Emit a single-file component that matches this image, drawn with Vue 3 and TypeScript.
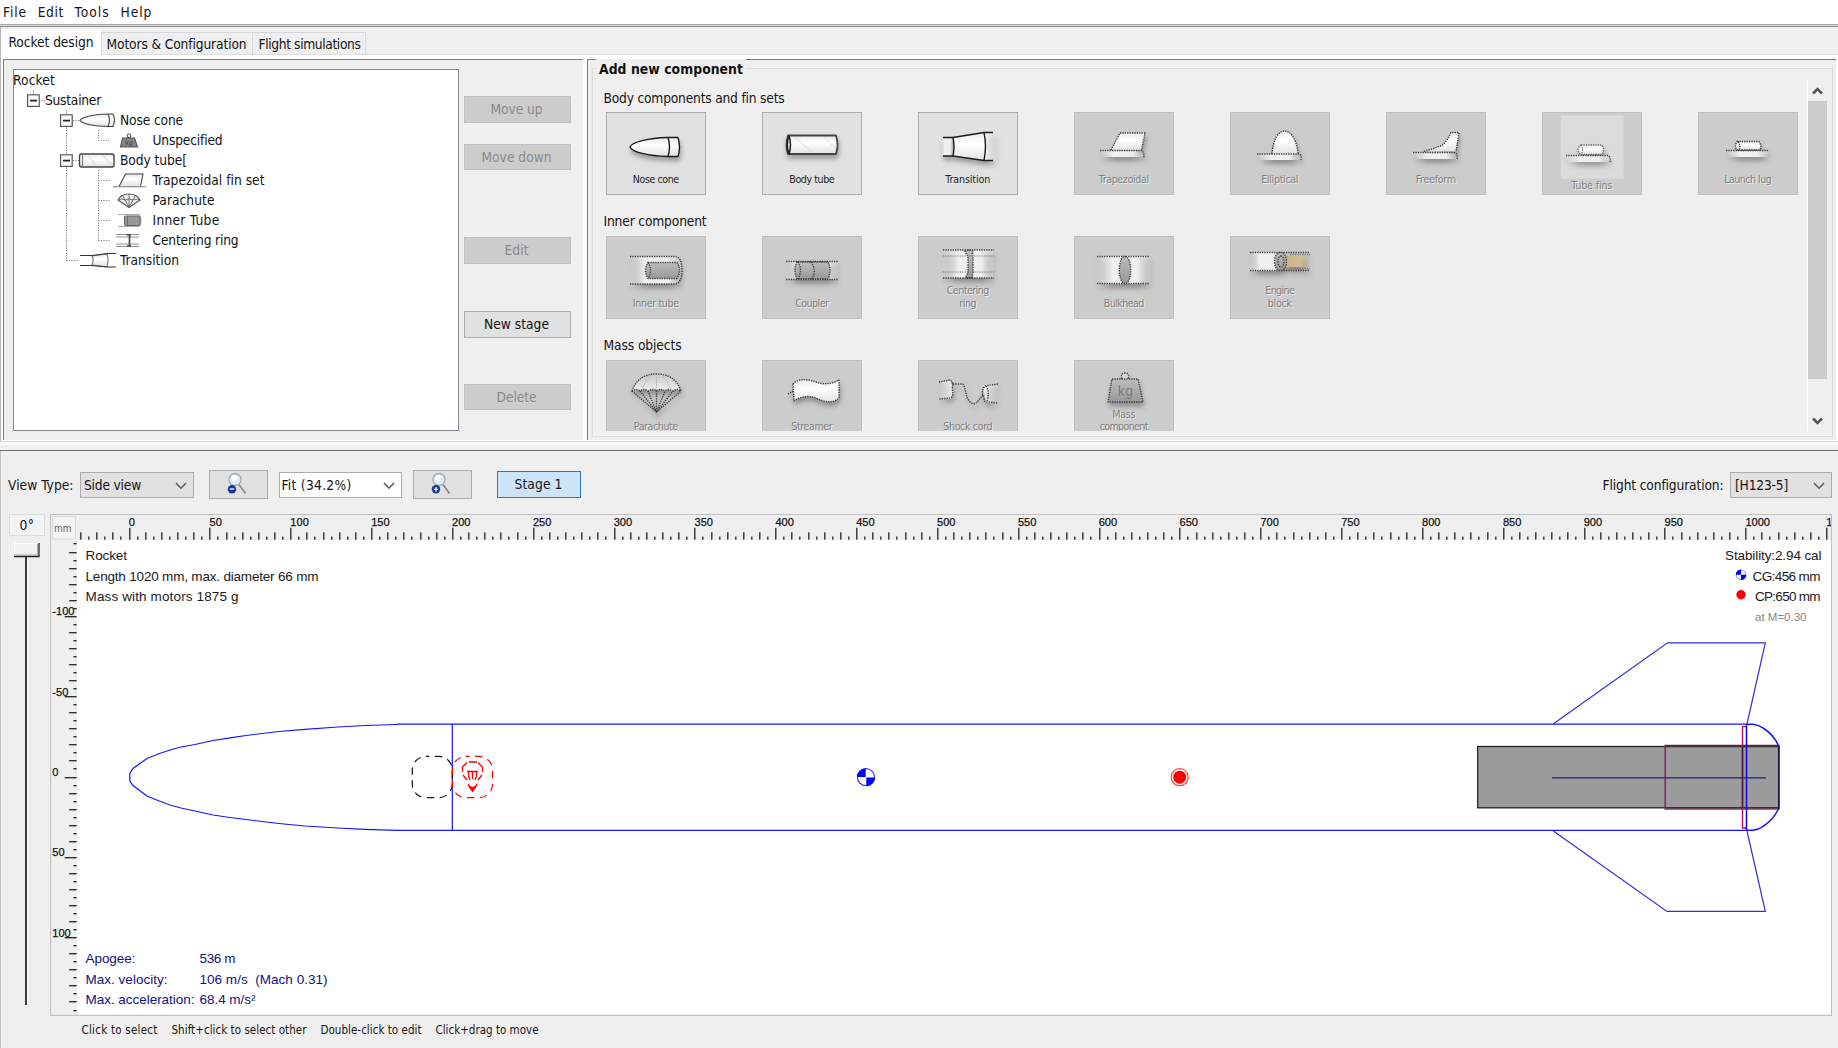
<script setup lang="ts">
interface Shape { d: string; fill?: string; stroke?: string; w?: number }
interface Card { label: string[]; width: number[]; enabled?: boolean; tile?: boolean; low?: boolean; kg?: boolean; shapes: Shape[] }
interface Section { title: string; width: number; cards: Card[] }
interface TreeRow { text: string; x: number; width: number; box?: number; icon?: string }

// Tightens or loosens tracking so that a label takes the given width.
const fit = (el: HTMLElement, width: number) => {
  el.style.letterSpacing = '0px'
  const n = (el.textContent ?? '').length
  if (n > 0) el.style.letterSpacing = `${(width - el.getBoundingClientRect().width) / n}px`
}
const vFit = { mounted: (el: HTMLElement, b: { value: number }) => fit(el, b.value) }

const menus = [
  { text: 'File', width: 24 }, { text: 'Edit', width: 26 }, { text: 'Tools', width: 35 }, { text: 'Help', width: 32 },
]

const tree: TreeRow[] = [
  { text: 'Rocket', x: 0, width: 42 },
  { text: 'Sustainer', x: 32, width: 56, box: 14 },
  { text: 'Nose cone', x: 107, width: 63, box: 47, icon: 'nose' },
  { text: 'Unspecified', x: 139.5, width: 70, icon: 'mass' },
  { text: 'Body tube[', x: 107, width: 67, box: 47, icon: 'tube' },
  { text: 'Trapezoidal fin set', x: 139.5, width: 112, icon: 'fin' },
  { text: 'Parachute', x: 139.5, width: 62, icon: 'chute' },
  { text: 'Inner Tube', x: 139.5, width: 67, icon: 'inner' },
  { text: 'Centering ring', x: 139.5, width: 86, icon: 'ring' },
  { text: 'Transition', x: 107, width: 59, icon: 'trans' },
]

const W = 'url(#metal)'
const F = 'url(#fade)'
const G = 'url(#dark)'
const N = 'none'

const sections: Section[] = [
  {
    title: 'Body components and fin sets', width: 181, cards: [
      { label: ['Nose cone'], width: [46], enabled: true, shapes: [
        { d: 'M24 35C26 30 42 26 62 25.5H72Q75 35 72 44.5H62C42 44 26 40 24 35Z', fill: W },
        { d: 'M62 25.5Q65 35 62 44.5', fill: N }] },
      { label: ['Body tube'], width: [45], enabled: true, shapes: [
        { d: 'M26 23.5H74Q77 33 74 42H26Q23 33 26 23.5Z', fill: W, stroke: '#444', w: 1.8 },
        { d: 'M33 25L51 41M62 25L74 37', fill: N, stroke: '#d8d8d8', w: 0.8 },
        { d: 'M27 23.5Q30 33 27 42Q23.500 33 27 23.500', fill: '#ddd' }] },
      { label: ['Transition'], width: [45], enabled: true, shapes: [
        { d: 'M23 25.5H35V44H23Z', fill: F, stroke: N },
        { d: 'M67 20.500H80V49H67Z', fill: 'url(#fadeR)', stroke: N },
        { d: 'M35 25.5L66 20.500Q69 34 66 48.500L35 44Q37 35 35 25.500Z', fill: W },
        { d: 'M25 25.500H35M25 44H35M66 20.500H75M66 48.500H75', fill: N }] },
      { label: ['Trapezoidal'], width: [50], shapes: [
        { d: 'M26 38.500H70V45H28Z', fill: F, stroke: N },
        { d: 'M37 38L46 21H71L67.500 38', fill: W },
        { d: 'M26 38.500H68Q70 40 70 46', fill: N }] },
      { label: ['Elliptical'], width: [37], shapes: [
        { d: 'M27 42H71V48H31Z', fill: F, stroke: N },
        { d: 'M42 42C43 28 48 19 54.500 19C61 19 67 28 68 42', fill: W },
        { d: 'M27 42H69Q72 43 71 48', fill: N }] },
      { label: ['Freeform'], width: [40], shapes: [
        { d: 'M27 40.500H71V47H30Z', fill: F, stroke: N },
        { d: 'M38 39.500L56 33.500Q62 28 65 20.500H73L70 39.500', fill: W },
        { d: 'M27 40.500H69Q72 42 71 47', fill: N }] },
      { label: ['Tube fins'], width: [41], tile: true, low: true, shapes: [
        { d: 'M24 43.500H68V50H28Z', fill: F, stroke: N },
        { d: 'M39 33H60Q63 38 60 42.500H39Q33 38 39 33Z', fill: W, stroke: '#666' },
        { d: 'M39 33Q42 38 39 42.500', fill: N, stroke: '#888' },
        { d: 'M24 43.500H66Q69 45 68 50', fill: N }] },
      { label: ['Launch lug'], width: [47], shapes: [
        { d: 'M28 38.500H71L69 45H31Z', fill: F, stroke: N },
        { d: 'M39 29.500H61Q64 34 62 38H39Q36 34 39 29.500Z', fill: W },
        { d: 'M40 29.500Q43 34 41 38M28 38.500H71', fill: N }] },
    ],
  },
  {
    title: 'Inner component', width: 103, cards: [
      { label: ['Inner tube'], width: [46], shapes: [
        { d: 'M24 20.500H72Q79 34 72 48H24Z', fill: F, stroke: N },
        { d: 'M42 26.500H71Q76 34 71 42.500H42Q37 34 42 26.500Z', fill: G },
        { d: 'M42 26.500Q47 34 42 42.500M24 20.500H69Q76 21 76 34Q76 47 69 48H24', fill: N }] },
      { label: ['Coupler'], width: [33], shapes: [
        { d: 'M24 25.500H76V43.500H24Z', fill: F, stroke: N },
        { d: 'M35 26H66Q70 34 66 43H35Q31 34 35 26Z', fill: G },
        { d: 'M36 26Q41 34 36 43M49 26Q55 34 50 43M24 25.500H76M24 43.500H76', fill: N }] },
      { label: ['Centering', 'ring'], width: [42, 17], shapes: [
        { d: 'M25 14H76V42H25Z', fill: F, stroke: N },
        { d: 'M47 15Q51 13 55 15Q54 19 55 21V36Q54 40 55 42H48Q48 39 50 37V20Q48 18 47 15Z', fill: G },
        { d: 'M25 14H76M25 42H76', fill: N },
        { d: 'M25 20H76M25 36H76', fill: N, stroke: '#777', w: 1.1 }] },
      { label: ['Bulkhead'], width: [40], shapes: [
        { d: 'M22 20H77V48H22Z', fill: F, stroke: N },
        { d: 'M23 20.500H76M23 47.500H76', fill: N },
        { d: 'M51 20.500C58.500 20.500 58.500 47.500 51 47.500C43.500 47.500 43.500 20.500 51 20.500Z', fill: G }] },
      { label: ['Engine', 'block'], width: [29, 24], shapes: [
        { d: 'M20 16H52V35H20Z', fill: F, stroke: N },
        { d: 'M52 20H79V31H52Z', fill: 'url(#tan)', stroke: N },
        { d: 'M20 16.500H80M20 34.500H80', fill: N },
        { d: 'M60 18.500H80M60 32.500H80', fill: N, stroke: '#777' },
        { d: 'M50.500 16.500C58.500 16.500 58.500 34.500 50.500 34.500C42.500 34.500 42.500 16.500 50.500 16.500ZM51 20C55 20 55 31 51 31C47 31 47 20 51 20Z', fill: G }] },
    ],
  },
  {
    title: 'Mass objects', width: 78, cards: [
      { label: ['Parachute'], width: [44], shapes: [
        { d: 'M26 31Q32 14 50.500 14Q69 14 75 31Q70 28 67 31Q62 28 59 31Q54 28 50.500 31Q47 28 42 31Q39 28 34 31Q30 28 26 31Z', fill: 'url(#canopy)' },
        { d: 'M26 31L50.500 52L75 31M34 31L50.500 52L67 31M42 31L50.500 52L59 31M50.500 31V52', fill: N },
        { d: 'M36 30Q39 21 44 17M65 30Q62 21 57 17M50.500 17V30', fill: N, stroke: '#aaa', w: 1 }] },
      { label: ['Streamer'], width: [41], shapes: [
        { d: 'M31 24C36 18 46 19 54 22C62 25 70 24 77 20V38C71 44 62 42 54 38C45 35 38 37 32 41Z', fill: W },
        { d: 'M26 34L31 31', fill: N }] },
      { label: ['Shock cord'], width: [49], shapes: [
        { d: 'M21 21H32Q37 30 33 39H21Z', fill: 'url(#fadeL)', stroke: N },
        { d: 'M65 25H80V43H68Z', fill: 'url(#fadeR)', stroke: N },
        { d: 'M21 22L32 20Q36 22 34 29Q36 35 33 38L21 39M35 24H45C49 31 47 37 52 42Q56 46 60 41L65 35M80 24L67 26Q62 31 66 38Q66 43 70 42L80 43M68 26Q72 32 69 41', fill: N }] },
      { label: ['Mass', 'component'], width: [23, 48], kg: true, shapes: [
        { d: 'M48 19Q46 13 51 13Q56 13 54 19', fill: '#ddd' },
        { d: 'M38 19H64L69 42H34Z', fill: G }] },
    ],
  },
]

const SX = 1.6167
const SY = 1.607
const hTicks = Array.from({ length: 217 }, (_, i) => (i - 6) * 5).map((v) => ({ v, x: Math.round(129.5 + v * SX) - 0.2 }))
const hLabels = Array.from({ length: 22 }, (_, i) => i * 50)
const vTicks = Array.from({ length: 59 }, (_, i) => (i - 29) * 5).map((v) => ({ v, y: Math.round(777.5 + v * SY) - 0.3 }))
const vLabels = [-100, -50, 0, 50, 100]
const chars = (v: number) => String(v).replace('-', '').length * 6.15 + (v < 0 ? 3.8 : 0)
const tick = (v: number) => (v % 50 === 0 ? 12 : v % 10 === 0 ? 7.5 : 3.3)

const stats = [
  { y: 963, k: 'Apogee:', kw: 50, v: '536 m', vw: 36 },
  { y: 984, k: 'Max. velocity:', kw: 82, v: '106 m/s  (Mach 0.31)', vw: 128 },
  { y: 1004, k: 'Max. acceleration:', kw: 109, v: '68.4 m/s²', vw: 56 },
]
const hints = [
  { t: 'Click to select', w: 76 }, { t: 'Shift+click to select other', w: 135 },
  { t: 'Double-click to edit', w: 101 }, { t: 'Click+drag to move', w: 103 },
]
const noseUpper = 'M129.800 777.500V773.500L133 768.500L147 758.500L158 754L170 750L181 747L195 744.500L213 740.500L230 737.800L246 735.500L262 733.500L279 731.500L305 729.300L338 727L365 725.500L397 724.500'
const noseLower = 'M129.800 777V781L133 785.500L147 796L158 800.500L170 805L181 808L195 811L213 815L230 817.500L246 819.500L262 821.500L279 823.500L305 826L338 828L365 829.300L397 830.300'
</script>

<template>
  <div class="app">
    <svg class="defs" width="0" height="0">
      <defs>
        <linearGradient id="metal" x1="0" y1="0" x2="0" y2="1"><stop offset="0" stop-color="#e9e9e9" /><stop offset=".4" stop-color="#fff" /><stop offset="1" stop-color="#e2e2e2" /></linearGradient>
        <linearGradient id="dark" x1="0" y1="0" x2="0" y2="1"><stop offset="0" stop-color="#bdbdbd" /><stop offset="1" stop-color="#989898" /></linearGradient>
        <linearGradient id="canopy" x1="0" y1="0" x2="0" y2="1"><stop offset="0" stop-color="#c8c8c8" /><stop offset="1" stop-color="#efefef" /></linearGradient>
        <linearGradient id="fade"><stop offset="0" stop-color="#f4f4f4" stop-opacity="0" /><stop offset=".3" stop-color="#f0f0f0" /><stop offset=".75" stop-color="#eee" /><stop offset="1" stop-color="#eee" stop-opacity=".15" /></linearGradient>
        <linearGradient id="fadeR"><stop offset="0" stop-color="#f4f4f4" /><stop offset="1" stop-color="#fff" stop-opacity="0" /></linearGradient>
        <linearGradient id="fadeL"><stop offset="0" stop-color="#fff" stop-opacity="0" /><stop offset="1" stop-color="#eee" /></linearGradient>
        <linearGradient id="tan"><stop offset="0" stop-color="#c8b486" /><stop offset=".7" stop-color="#cdbb93" /><stop offset="1" stop-color="#cdbb93" stop-opacity="0" /></linearGradient>
      </defs>
    </svg>

    <nav class="menubar"><span v-for="m in menus" :key="m.text" v-fit="m.width">{{ m.text }}</span></nav>
    <div class="groove"></div>

    <div class="tabs">
      <div class="tab on"><span v-fit="85">Rocket design</span></div>
      <div class="tab second"><span v-fit="140">Motors &amp; Configuration</span></div>
      <div class="tab third"><span v-fit="102">Flight simulations</span></div>
    </div>

    <div class="panes">
      <section class="pane left">
        <div class="tree">
          <svg class="lines" width="260" height="200" fill="none" stroke="#808080" stroke-dasharray="1.2 1.3">
            <path d="M20.500 20V26M26 30.500H32M53.500 40V191M60 50.500H66M60 90.500H66M53.500 190.500H65M85.500 60V70.500H97M85.500 100V170.500M85.500 110.500H97M85.500 130.500H97M85.500 150.500H97M85.500 170.500H97" />
          </svg>
          <div v-for="r in tree" :key="r.text" class="row" :style="{ paddingLeft: r.x + 'px' }">
            <svg class="glyph" width="112" height="20" fill="none" stroke="#444" stroke-width="1.1">
              <g v-if="r.box"><rect :x="r.box + 0.600" y="4.800" width="11.600" height="11.600" fill="#fff" stroke="#555" stroke-width="1.200" /><path :d="`M${r.box + 3} 10.600h7`" stroke="#222" stroke-width="1.800" /></g>
              <g v-if="r.icon === 'nose'"><path d="M67 10.300C69 7 81 4 95 4H100Q103 10 100 16.500H95C81 16.500 69 14 67 10.300Z" fill="url(#metal)" /><path d="M95 4Q98 10 95 16.500" /></g>
              <g v-else-if="r.icon === 'mass'" stroke="#555"><path d="M109.500 8H121.500L124.500 17H107.500Z" fill="#858585" /><circle cx="116" cy="5.800" r="1.800" /><text x="116" y="15" text-anchor="middle" class="tiny">kg</text></g>
              <g v-else-if="r.icon === 'tube'"><rect x="66.500" y="4" width="34.500" height="13" rx="2" fill="url(#metal)" stroke-width="1.400" /><path d="M75 5.500L84 16M90 5.500L99 15" stroke="#e0e0e0" /><path d="M69.500 4V17" stroke="#777" /></g>
              <g v-else-if="r.icon === 'fin'"><path d="M106 16.500L112.500 4H130L127.500 16.500" fill="url(#metal)" /><path d="M100 16.800H133" stroke="#777" /></g>
              <g v-else-if="r.icon === 'chute'" stroke="#555"><path d="M105 10Q108 4 116 4Q124 4 127 10L116 17.500Z" fill="#eee" /><path d="M105 10Q109 8 112 10Q116 8 120 10Q124 8 127 10M112 10L116 17L120 10M116 4V17M110 6L112 10M122 6L120 10" stroke-width=".8" /></g>
              <g v-else-if="r.icon === 'inner'"><path d="M105 4.500H125Q128 5 128 10Q128 16 125 16.500H105" stroke="#aaa" /><rect x="111.500" y="6" width="15.500" height="9.500" rx="1.500" fill="#999" stroke="#666" /><path d="M114.500 6V15.500" stroke="#666" stroke-width=".8" /></g>
              <g v-else-if="r.icon === 'ring'" stroke="#777"><path d="M103 4.500H126M103 7H126M103 14H126M103 16.500H126" stroke-width=".8" /><path d="M113.500 4.800H118M116.500 5V16M114 16H118" stroke="#444" stroke-width="1.600" /></g>
              <g v-else-if="r.icon === 'trans'"><path d="M79 6L94 4Q96 10 94 17L79 15Q81 10 79 6Z" fill="url(#metal)" stroke="#777" /><path d="M67 5.500H79L94 3.500H103M67 15.500H79L94 17H103" stroke="#333" /></g>
            </svg>
            <span v-fit="r.width">{{ r.text }}</span>
          </div>
        </div>
        <div class="actions">
          <button disabled><span v-fit="52">Move up</span></button>
          <button disabled class="g1"><span v-fit="70">Move down</span></button>
          <button disabled class="g2"><span v-fit="24">Edit</span></button>
          <button class="g3"><span v-fit="65">New stage</span></button>
          <button disabled class="g4"><span v-fit="40">Delete</span></button>
        </div>
      </section>

      <section class="pane right">
        <div class="group">
          <span class="legend"><b v-fit="144">Add new component</b></span>
          <div class="view">
            <div v-for="s in sections" :key="s.title" class="sect">
              <div class="stitle"><span v-fit="s.width">{{ s.title }}</span></div>
              <div class="cards">
                <div v-for="c in s.cards" :key="c.label[0]" class="card" :class="{ off: !c.enabled }">
                  <svg width="100" height="82" class="pic">
                    <g v-if="c.tile"><rect x="18.700" y="3.500" width="63" height="63" fill="#dbdbdb" /></g>
                    <g class="art" stroke-linejoin="round">
                      <path v-for="(p, i) in c.shapes" :key="i" :d="p.d" :fill="p.fill" :stroke="p.stroke ?? (c.enabled ? '#1c1c1c' : '#3c3c3c')" :stroke-width="p.w ?? 1.4" />
                      <text v-if="c.kg" x="51.500" y="36" text-anchor="middle" class="kg">kg</text>
                    </g>
                  </svg>
                  <div class="cap" :class="{ low: c.low }"><div v-for="(l, i) in c.label" :key="l"><span v-fit="c.width[i]">{{ l }}</span></div></div>
                </div>
              </div>
            </div>
          </div>
          <div class="scroll">
            <svg width="19" height="21"><path d="M5 13.500L9.500 9L14 13.500" fill="none" stroke="#555" stroke-width="2.600" /></svg>
            <div class="thumb"></div>
            <svg width="19" height="19"><path d="M5 7.500L9.500 12L14 7.500" fill="none" stroke="#555" stroke-width="2.600" /></svg>
          </div>
        </div>
      </section>
    </div>

    <div class="split"></div>

    <section class="lower">
      <div class="toolbar">
        <span class="lab" v-fit="65.500">View Type:</span>
        <div class="combo side"><span v-fit="57">Side view</span><svg width="12" height="8"><path d="M1 1L6 6.200L11 1" /></svg></div>
        <div class="zoom out">
          <svg width="26" height="26"><path d="M13 12.500L19.500 21.500" stroke="#8a8a8a" stroke-width="1.800" /><circle cx="9" cy="7.500" r="6" fill="#dcebfa" stroke="#a3a9b0" stroke-width="1.300" /><circle cx="8" cy="6" r="3" fill="#fff" /><circle cx="6" cy="17.300" r="4.200" fill="#17399b" /><path d="M3.800 17H8.200" stroke="#fff" stroke-width="1.300" /></svg>
        </div>
        <div class="combo fitc"><span v-fit="70">Fit (34.2%)</span><svg width="12" height="8"><path d="M1 1L6 6.200L11 1" /></svg></div>
        <div class="zoom in">
          <svg width="26" height="26"><path d="M13 12.500L19.500 21.500" stroke="#8a8a8a" stroke-width="1.800" /><circle cx="9" cy="7.500" r="6" fill="#dcebfa" stroke="#a3a9b0" stroke-width="1.300" /><circle cx="8" cy="6" r="3" fill="#fff" /><circle cx="6" cy="17.300" r="4.200" fill="#17399b" /><path d="M3.800 17.300H8.200M6 15.100V19.500" stroke="#fff" stroke-width="1.300" /></svg>
        </div>
        <div class="stage"><span v-fit="48">Stage 1</span></div>
        <span class="flight" v-fit="121">Flight configuration:</span>
        <div class="combo conf"><span v-fit="53">[H123-5]</span><svg width="12" height="8"><path d="M1 1L6 6.200L11 1" /></svg></div>
      </div>

      <div class="work">
        <div class="rotate">
          <div class="deg"><span v-fit="15">0°</span></div>
          <svg width="30" height="466" class="slider">
            <path d="M12 15V463" stroke="#3c3c3c" stroke-width="2" /><path d="M13.500 15V464" stroke="#fff" stroke-width="1" />
            <rect x="0" y="1" width="25" height="13.500" fill="#f2f2f2" />
            <path d="M.5 13V1.500H24" stroke="#fff" fill="none" /><path d="M0 14.500H25V1" stroke="#222" stroke-width="1.300" fill="none" /><path d="M1 13H23.500V2" stroke="#a5a5a5" fill="none" />
          </svg>
        </div>
        <svg class="canvas" width="1782" height="502" viewBox="50 514 1782 502">
          <rect x="50" y="514" width="1782" height="502" fill="#efefef" />
          <rect x="77" y="540" width="1754" height="475" fill="#fff" />
          <g stroke="#222" stroke-width="1.300">
            <path v-for="t in hTicks" :key="t.v" :d="`M${t.x} 539.700v${-tick(t.v)}`" />
            <path v-for="t in vTicks" :key="t.v" :d="`M76.700 ${t.y}h${-tick(t.v)}`" />
          </g>
          <g class="num">
            <text v-for="v in hLabels" :key="v" :x="128.700 + v * SX" y="526" :textLength="chars(v)" lengthAdjust="spacingAndGlyphs">{{ v }}</text>
            <text v-for="v in vLabels" :key="v" x="52.300" :y="776 + v * SY" :textLength="chars(v)" lengthAdjust="spacingAndGlyphs">{{ v }}</text>
          </g>
          <rect x="52.500" y="516.500" width="23" height="22.500" fill="#f3f3f3" stroke="#dadada" />
          <text x="54" y="531.500" class="mm" textLength="17.500" lengthAdjust="spacingAndGlyphs">mm</text>

          <g class="info">
            <text x="85.500" y="559.700" textLength="41.500">Rocket</text>
            <text x="85.500" y="581" textLength="233">Length 1020 mm, max. diameter 66 mm</text>
            <text x="85.500" y="601" textLength="153">Mass with motors 1875 g</text>
            <text x="1725" y="559.700" textLength="96.500">Stability:2.94 cal</text>
            <text x="1752.500" y="581" textLength="68">CG:456 mm</text>
            <text x="1755" y="601" textLength="65.500">CP:650 mm</text>
            <text x="1755" y="621.300" textLength="51.500" class="mach">at M=0.30</text>
          </g>
          <g class="info navy">
            <template v-for="s in stats" :key="s.k">
              <text x="85.500" :y="s.y" :textLength="s.kw">{{ s.k }}</text>
              <text x="199.500" :y="s.y" :textLength="s.vw">{{ s.v }}</text>
            </template>
          </g>

          <circle cx="1741" cy="574.800" r="4.800" fill="#fff" stroke="#7f7fff" stroke-width="1" />
          <path d="M1741 574.800V569.500A5.300 5.300 0 0 0 1735.700 574.800ZM1741 574.800V580.100A5.300 5.300 0 0 0 1746.300 574.800Z" fill="#00f" />
          <circle cx="1741" cy="594.800" r="4.700" fill="red" />

          <!-- motor, inner tube and centering ring -->
          <rect x="1477.700" y="746.500" width="301" height="61.300" fill="#9b9b9b" stroke="#262626" stroke-width="1.300" />
          <rect x="1665.200" y="745.400" width="113.700" height="63.600" fill="none" stroke="#8d0e52" stroke-width="1.300" />
          <path d="M1665.200 746.600H1779M1665.200 807.800H1779" stroke="#333" />
          <path d="M1746 726.600H1742.500V828H1746" fill="none" stroke="#b5006a" stroke-width="1.300" />
          <path d="M1742.500 746V808.500" stroke="#4a1232" stroke-width="1.400" />
          <path d="M1552 777.900H1766" stroke="#20207c" stroke-width="1.400" />
          <path d="M1778.700 746V809" stroke="#15153c" stroke-width="1.400" />

          <g fill="none" stroke="#1414ff" stroke-width="1.200">
            <path :d="noseUpper" /><path :d="noseLower" />
            <path d="M397 724.200H1746.500M397 830.400H1746.500M452.300 724V830.500" />
            <path d="M1746.500 724V830.500" stroke="#0c0ccc" stroke-width="1.500" />
            <path d="M1746.500 724.200H1753Q1759 725 1763 728Q1773 734 1778.500 745.500M1746.500 830.300H1753Q1759 829.500 1763 826.500Q1773 820 1778.500 809" stroke-width="1.500" />
            <path d="M1553.500 723.800L1667.500 642.800H1765.300L1747 724M1553 830.800L1667 911.400H1765.300L1747 831" stroke="#2f2fe0" />
          </g>
          <g fill="none" stroke-width="1.200">
            <rect x="412.300" y="756.400" width="40" height="41.300" rx="13.500" stroke="#111" stroke-dasharray="7.500 5.500" stroke-dashoffset="4" />
            <g stroke="red">
              <rect x="452.500" y="756.400" width="40" height="41.300" rx="13.500" stroke-dasharray="7.500 5.500" stroke-dashoffset="4" />
              <path d="M469 762H477M467 762.500L462.500 767V772M478 762.500L482.500 767V772M463 775L467 780M482 775L478 780M467 771.500H478M468.500 772V776L470 780M472.500 772V779M476.500 772V776L475 780M468 784L472 790M477 784L473 790" stroke-width="1.300" />
            </g>
            <path d="M467.500 785L472.500 792.500L477.500 785L472.500 787Z" fill="red" />
          </g>
          <circle cx="866" cy="777.200" r="8.500" fill="#fff" stroke="#3c3cff" stroke-width="1.200" />
          <path d="M865.700 776.900V768.200A9 9 0 0 0 857 776.900ZM866.300 777.500V786.200A9 9 0 0 0 875 777.500Z" fill="#00f" />
          <circle cx="1179.700" cy="777.200" r="8.500" fill="#fff" stroke="#f44" stroke-width="1.200" />
          <circle cx="1179.700" cy="777.200" r="6.500" fill="red" />
          <path d="M50.500 1015.500V514.500H1831.500V1015.300H50.500" fill="none" stroke="#c3c3c3" stroke-width="1.200" />
        </svg>
      </div>
      <div class="hints"><span v-for="h in hints" :key="h.t" v-fit="h.w">{{ h.t }}</span></div>
    </section>
  </div>
</template>

<style>
body { margin: 0; background: #efefef; overflow: hidden; }
</style>

<style scoped>
.app { width: 1838px; height: 1048px; overflow: hidden; display: flex; flex-direction: column; background: #efefef; color: #151515; font: 13.7px/20px "DejaVu Sans Condensed", "DejaVu Sans", sans-serif; position: relative; }
.defs { position: absolute; }
span, b { display: inline-block; white-space: pre; flex: none; }
.menubar { height: 24px; flex: none; background: #fff; display: flex; padding: 2px 0 0 3px; box-sizing: border-box; gap: 10.800px; }
.groove { height: 3px; flex: none; box-sizing: border-box; border-top: 1px solid #a5a5a5; border-bottom: 1px solid #858585; background: #dedede; }
.tabs { height: 28px; flex: none; display: flex; align-items: flex-end; border-left: 1px solid #b5b5b5; }
.tab { box-sizing: border-box; border: 1px solid #d9d9d9; border-bottom-color: #dcdcdc; height: 23.500px; display: flex; align-items: center; flex: none; padding-top: 1px; }
.tab.on { width: 100px; height: 26px; background: #fff; border: 0; padding: 0 0 1px 7.500px; }
.tab.second { width: 152px; padding-left: 4.500px; }
.tab.third { width: 113px; padding-left: 5.500px; border-left: 0; }
.tabs::after { content: ""; flex: 1; height: 1px; background: #dcdcdc; }
.panes { flex: none; height: 386px; box-sizing: border-box; background: #fff; padding: 4px 2px 0 2px; display: flex; gap: 4px; border-left: 1px solid #b5b5b5; }
.pane { box-sizing: border-box; height: 381px; border-top: 1px solid #7c7c7c; border-left: 1px solid #7c7c7c; background: #efefef; display: flex; }
.left { width: 580px; padding: 9px 0 0 9px; }
.right { flex: 1; padding: 8px 3px 0 4px; }
.tree { position: relative; box-sizing: border-box; width: 446px; height: 362px; border: 1px solid #828790; background: #fff; margin-left: -0.500px; }
.lines { position: absolute; left: -1px; top: 0; }
.row { height: 20px; position: relative; display: flex; align-items: center; left: -0.500px; }
.glyph { position: absolute; left: -0.500px; top: 0; overflow: visible; }
.tiny { font-size: 7px; fill: #444; stroke: none; }
.actions { display: flex; flex-direction: column; padding: 27px 0 0 6px; margin-left: -0.500px; }
button { box-sizing: border-box; width: 107px; height: 26.500px; border: 1.500px solid #adadad; background: #e1e1e1; color: #111; font: inherit; padding: 0 2px 0 0; display: flex; align-items: center; justify-content: center; }
button:disabled { background: #ccc; border-color: #c0c0c0; color: #8a8a8a; }
.g1 { margin-top: 21px; } .g2 { margin-top: 67px; } .g3 { margin-top: 47.500px; } .g4 { margin-top: 46px; }
.group { position: relative; flex: 1; box-sizing: border-box; height: 369px; border: 1.300px solid #dcdcdc; display: flex; padding: 11px 4px 0 3px; }
.legend { position: absolute; left: 3px; top: -10px; background: #efefef; padding: 0 3px; font-size: 13.800px; color: #111; }
.view { width: 1211px; height: 351px; overflow: hidden; flex: none; padding-left: 9.700px; box-sizing: border-box; }
.sect { height: 123.800px; padding-top: 7.500px; box-sizing: border-box; }
.stitle { height: 24.800px; }
.stitle span { margin-left: -2.200px; }
.cards { display: flex; gap: 55.800px; }
.card { width: 100.200px; height: 82.500px; box-sizing: border-box; border: 1.300px solid #adadad; background: #e1e1e1; flex: none; display: grid; }
.card.off { background: #ccc; border-color: #c0c0c0; }
.pic { grid-area: 1 / 1; margin: -1px; overflow: visible; }
.art { filter: drop-shadow(1px 4px 2.500px rgba(0, 0, 0, .3)); }
.off .art { stroke-dasharray: 1.300 1.100; }
.kg { font-size: 14px; fill: #7c7c7c; stroke: none; }
.cap { grid-area: 1 / 1; align-self: end; text-align: center; font-size: 10.600px; line-height: 12.500px; padding-bottom: 8.500px; color: #222; }
.cap.low { padding-bottom: 2.500px; }
.off .cap { color: #808080; text-shadow: 1px 1px 0 #ececec; }
.cap span { margin: 0 -20px; }
.scroll { height: 351px; width: 19px; border-left: 1.500px solid #fff; flex: none; display: flex; flex-direction: column; }
.scroll svg { flex: none; display: block; }
.thumb { height: 277.500px; background: #cdcdcd; margin-bottom: 32px; }
.split { height: 10px; flex: none; box-sizing: border-box; background: #efefef; border-top: 1px solid #dadada; box-shadow: inset 0 3px 0 #fff; border-bottom: 1.300px solid #6f6f6f; }
.lower { flex: 1; border-left: 1px solid #c4c4c4; display: flex; flex-direction: column; }
.toolbar { height: 63px; flex: none; display: flex; align-items: flex-start; padding-top: 18.500px; box-sizing: border-box; line-height: 20px; }
.lab { margin: 5px 6.500px 0 7px; }
.combo { box-sizing: border-box; height: 26px; margin-top: 2px; border: 1.300px solid #adadad; background: #e1e1e1; display: flex; align-items: center; justify-content: space-between; padding: 0 6px 0 3px; flex: none; }
.combo svg { fill: none; stroke: #5a5a5a; stroke-width: 1.500; margin-top: 3px; }
.side { width: 114px; }
.fitc { width: 123px; background: #fff; margin-left: 11px; padding-left: 1.500px; }
.conf { width: 102px; margin: 2px 6.500px 0 6px; padding-left: 4.500px; }
.zoom { box-sizing: border-box; width: 59px; height: 29px; border: 1.300px solid #adadad; background: #e1e1e1; margin-left: 15px; padding: 1.500px 0 0 16px; flex: none; line-height: 0; }
.zoom.in { margin-left: 11px; }
.stage { box-sizing: border-box; width: 84px; height: 27px; margin: 1px 0 0 24.500px; border: 1.500px solid #2b76b5; background: #cce4f7; display: flex; align-items: center; justify-content: center; flex: none; }
.flight { margin: 5px 0 0 auto; }
.work { display: flex; flex: none; height: 502px; }
.rotate { width: 49px; flex: none; }
.deg { margin: 0 0 0 8px; width: 36px; height: 22px; box-sizing: border-box; border: 1.300px solid #dcdcdc; background: #f3f3f3; display: flex; justify-content: center; align-items: center; }
.slider { display: block; margin: 6px 0 0 13px; }
.canvas { display: block; flex: none; }
.num { font: 11.800px "Liberation Sans", Arial, sans-serif; fill: #111; stroke: #111; stroke-width: .25px; }
.mm { font: 11px "DejaVu Sans Condensed", sans-serif; fill: #666; }
.info { font: 13.500px "Liberation Sans", Arial, sans-serif; fill: #1a1a1a; white-space: pre; }
.info text { white-space: pre; }
.info .mach { font-size: 11.500px; fill: #858585; }
.navy { fill: #12127e; }
.hints { display: flex; gap: 14px; padding: 3.500px 0 0 80.500px; font-size: 11.500px; line-height: 20px; }
</style>
